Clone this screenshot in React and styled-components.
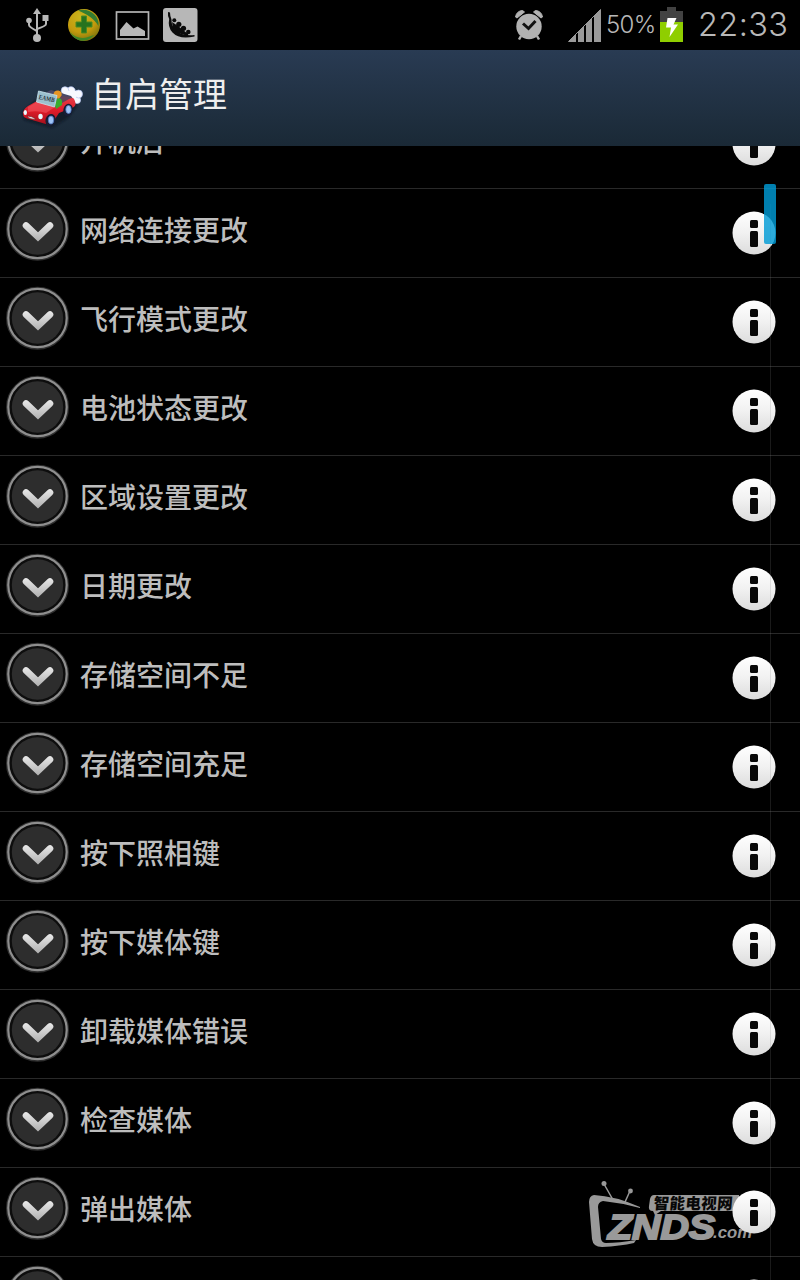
import React from 'react';
import styled, { createGlobalStyle } from 'styled-components';

const Global = createGlobalStyle`
  * { box-sizing: border-box; }
  body { margin: 0; background: #000; }
`;

const Screen = styled.div`
  width: 800px;
  height: 1280px;
  display: flex;
  flex-direction: column;
  overflow: hidden;
  background: #000;
  font-family: "Noto Sans CJK SC", sans-serif;
`;

const StatusBar = styled.div`
  height: 50px;
  flex: none;
  display: flex;
  justify-content: space-between;
  color: #b8b8b8;
  svg { display: block; flex: none; }
`;

const StatusGroup = styled.div`
  display: flex;
  align-items: flex-start;
`;

const StatusText = styled.span`
  width: ${(p) => p.$width}px;
  margin-left: ${(p) => p.$left}px;
  margin-right: ${(p) => p.$right || 0}px;
  font: ${(p) => p.$weight || 300} ${(p) => p.$size}px/50px Inter, sans-serif;
  letter-spacing: ${(p) => p.$spacing || 0}px;
  white-space: nowrap;
`;

const Header = styled.header`
  height: 96px;
  flex: none;
  display: flex;
  padding-left: 20px;
  background: linear-gradient(#293b53, #1a2936);
  position: relative;
  z-index: 2;
`;

const Title = styled.h1`
  margin: 0 0 0 6px;
  font-size: 34px;
  line-height: 86px;
  font-weight: 400;
  color: #eee;
`;

const List = styled.main`
  flex: 1;
  min-height: 0;
  overflow: hidden;
  position: relative;
`;

const Rows = styled.div`
  margin-top: -46px;
`;

const Row = styled.div`
  height: 89px;
  display: flex;
  align-items: flex-start;
  padding: 7px 24px 0 4px;
  border-bottom: 1px solid #292929;
`;

const Label = styled.span`
  flex: 1;
  margin-left: 9px;
  font-size: 28px;
  line-height: 66px;
  font-weight: 500;
  color: #bdbdbd;
`;

const ExpandIcon = styled.svg`
  width: 67px;
  height: 67px;
  flex: none;
`;

const InfoIcon = styled.svg`
  width: 44px;
  height: 44px;
  margin-top: 15px;
  position: relative;
  z-index: 1;
`;

const Track = styled.div`
  position: absolute;
  z-index: 2;
  left: 770px;
  top: 58px;
  bottom: 0;
  width: 1px;
  background: rgba(130, 130, 130, 0.2);
`;

const Thumb = styled.div`
  position: absolute;
  z-index: 3;
  left: 764px;
  top: 38px;
  width: 12px;
  height: 60px;
  border-radius: 2px;
  background: rgba(0, 155, 214, 0.82);
`;

const Watermark = styled.svg`
  position: absolute;
  left: 580px;
  top: 1030px;
`;

const labels = [
  '开机后', '网络连接更改', '飞行模式更改', '电池状态更改', '区域设置更改',
  '日期更改', '存储空间不足', '存储空间充足', '按下照相键', '按下媒体键',
  '卸载媒体错误', '检查媒体', '弹出媒体', '',
];

function Usb() {
  return (
    <svg width="60" height="50" fill="none" stroke="#b8b8b8" strokeWidth="2">
      <path d="M37 13v23M29 20v5q0 2 8 6M46 18v6q0 2-9 5" />
      <path d="M37 8l4 6h-8z" fill="#b8b8b8" stroke="none" />
      <circle cx="29" cy="20.5" r="2.8" fill="#b8b8b8" stroke="none" />
      <path d="M42.5 15h6v6h-6z" fill="#b8b8b8" stroke="none" />
      <circle cx="37" cy="38" r="4" fill="#b8b8b8" stroke="none" />
    </svg>
  );
}

function Shield() {
  return (
    <svg width="50" height="50" viewBox="60 0 50 50">
      <defs>
        <radialGradient id="gold" cx=".4" cy=".25" r=".8">
          <stop offset="0" stopColor="#c9b51d" />
          <stop offset=".6" stopColor="#c39a0d" />
          <stop offset="1" stopColor="#77710d" />
        </radialGradient>
      </defs>
      <circle cx="84" cy="25" r="16" fill="url(#gold)" />
      <path d="M78 10.500C88 7 100 15 98.500 26C94 18 86 14 78 10.500Z" fill="#347d32" />
      <path d="M70 32c5 6 12 7 18 5l6-2c-5 7-18 9-24-3z" fill="#3e8628" />
      <path d="M81.500 16h5v6H92v5h-5.500v6h-5v-6H76v-5h5.500z" fill="#27731e" stroke="#4e8b20" strokeWidth="1" strokeLinejoin="round" />
    </svg>
  );
}

function Picture() {
  return (
    <svg width="50" height="50" viewBox="110 0 50 50">
      <rect x="116.500" y="12" width="32" height="27" fill="none" stroke="#b4b4b4" strokeWidth="1.700" />
      <path d="M120 36v-6l6.500-8 7 6.500 4-2 7.500 4.500v5z" fill="#b8b8b8" />
    </svg>
  );
}

function PeaPod() {
  return (
    <svg width="42" height="50" viewBox="160 0 42 50">
      <rect x="163" y="8" width="34.500" height="34" rx="3" fill="#b7b7b7" />
      <path d="M168 12l2 .5q0 3.500 1.500 7Q171 27 178 32q6 4 16.500 3v1.500q-15 3.500-22-4-5-5.500-3.300-13.500-1.700-3-1.200-7z" fill="#0b0b0b" />
      <g fill="#0b0b0b">
        <circle cx="174.300" cy="20.300" r="2" />
        <circle cx="178.800" cy="24.300" r="2.600" />
        <circle cx="183.500" cy="28.300" r="2.600" />
        <circle cx="188.300" cy="32" r="2.300" />
        <path d="M172 22l6 4 5 4 5 4v2l-10-3-5-5z" />
      </g>
    </svg>
  );
}

function Alarm() {
  return (
    <svg width="54" height="50" viewBox="510 0 54 50">
      <circle cx="529" cy="26.500" r="12.700" fill="#b2b2b2" />
      <path d="M515.500 17q1-6 7-6.500l2 1.500-7.500 6zM542.500 17q-1-6-7-6.500l-2 1.500 7.500 6z" fill="#b2b2b2" stroke="#b2b2b2" strokeLinejoin="round" />
      <path d="M521 36l-2 3.500M537 36l2 3.500" stroke="#b2b2b2" strokeWidth="2.500" />
      <path d="M523 23.500l5.500 5 7-7.500" fill="none" stroke="#111" strokeWidth="3" />
    </svg>
  );
}

function Signal() {
  return (
    <svg width="38" height="50" viewBox="564 0 38 50" fill="#9a9a9a">
      <path d="M568 42l8-8v8zM578 32l6-6v16h-6zM586 24l6-6v24h-6zM594 16l7-7v33h-7z" />
      <path d="M568.500 41.500L600.500 9.500" stroke="#9a9a9a" strokeWidth="1" />
    </svg>
  );
}

function Battery() {
  return (
    <svg width="26" height="50" viewBox="659 0 26 50">
      <path d="M667 7h9v4h7v11h-23V11h7z" fill="#424242" />
      <path d="M660 22h23v20h-23z" fill="#8fce00" />
      <path d="M667.500 18h9l-3 6.500h4.500l-8.500 12.500 1.500-9.500h-5z" fill="#fff" />
    </svg>
  );
}

function Car() {
  return (
    <svg width="65" height="96" viewBox="20 50 65 96">
      <defs>
        <linearGradient id="paint" x1="0" y1="0" x2="0" y2="1">
          <stop offset="0" stopColor="#e63a45" />
          <stop offset=".5" stopColor="#dc1c2a" />
          <stop offset="1" stopColor="#a8101c" />
        </linearGradient>
        <filter id="soft" x="-20%" y="-30%" width="140%" height="160%"><feGaussianBlur stdDeviation="1.200" /></filter>
      </defs>
      <path d="M22 112l14-12 38-2 3 8-9 12-16 10-28-8z" fill="#0c1520" opacity=".7" filter="url(#soft)" />
      <g fill="#f7f9ff" stroke="#b5c4f0" strokeWidth=".7">
        <circle cx="77" cy="100" r="3.600" /><circle cx="78.500" cy="94" r="4" />
        <circle cx="71" cy="91" r="4.300" /><circle cx="65" cy="90.500" r="3.800" />
      </g>
      <path d="M63 91h13v8H64z" fill="#f7f9ff" />
      <path d="M47 92l4-2 20 6 3 4-14 8-12-2z" fill="#494968" />
      <path d="M60 96l11 1-9 7-3-3z" fill="#624459" />
      <path d="M23 114q0-5 5-8l9-5 18 6 14-8q4-2 5 0 3 5 0 8l-15 6-6 9q-4 3-9 1.500l-17-5q-4-1-4-4.500z" fill="url(#paint)" />
      <path d="M28 107l9-5 18 5-9 6q-8-3-18-1z" fill="#f1505a" opacity=".65" />
      <path d="M53.500 95q0-5 5-4.500 4 1 3 5l-3 4z" fill="#e79525" />
      <path d="M55 105l2-6q4-2 5 2l0 4-6 4z" fill="#38ad2c" />
      <path d="M38.500 91L57 95.500 54.500 107 36.500 102z" fill="#9bc0ce" stroke="#c8e3ed" strokeWidth=".8" />
      <text x="38.500" y="99" transform="rotate(12 38.5 99)" fontFamily="Liberation Serif, serif" fontWeight="700" fontSize="6.500" textLength="16" lengthAdjust="spacingAndGlyphs" fill="#28303c">EAMB</text>
      <g fill="#171d35"><ellipse cx="50.500" cy="120" rx="5" ry="6.300" transform="rotate(15 50 120)" /><ellipse cx="68" cy="110" rx="4.600" ry="6.300" transform="rotate(15 68 110)" /></g>
      <g fill="#9fc4f6" stroke="#527bc4" strokeWidth=".8"><ellipse cx="51" cy="120" rx="2.700" ry="4" /><ellipse cx="68.500" cy="109.500" rx="2.700" ry="4" /></g>
      <g fill="#e8fbff"><ellipse cx="25.300" cy="112.500" rx="1.700" ry="2.500" /><ellipse cx="40.500" cy="116.500" rx="2.200" ry="2.800" /></g>
      <path d="M27 116q5 0 9 3-6 1-9-3z" fill="#e8e8e8" stroke="#73101a" strokeWidth=".6" />
    </svg>
  );
}

function Expand() {
  return (
    <ExpandIcon viewBox="0 0 67 67">
      <circle cx="33.500" cy="33.200" r="29.500" fill="none" stroke="#aaa" strokeWidth="4" opacity=".28" />
      <circle cx="33.500" cy="33" r="29.200" fill="#0d0d0d" stroke="#8e8e8e" strokeWidth="2.200" />
      <circle cx="33.500" cy="33" r="25.700" fill="#2d2d2d" />
      <path d="M22 29.500L34 41 46 29.500" fill="none" stroke="url(#silver)" strokeWidth="6.600" strokeLinecap="round" />
    </ExpandIcon>
  );
}

function Info() {
  return (
    <InfoIcon viewBox="0 0 44 44">
      <circle cx="22" cy="22" r="21.500" fill="url(#pearl)" />
      <rect x="18" y="9" width="8" height="8" rx="1.500" fill="#080808" />
      <rect x="18" y="20" width="8" height="16" rx="1.500" fill="#080808" />
    </InfoIcon>
  );
}

function Brand() {
  return (
    <Watermark width="180" height="75" viewBox="580 1176 180 75">
      <g fill="#999">
        <circle cx="604" cy="1183.500" r="2.500" /><circle cx="630.500" cy="1191" r="2.400" />
        <path d="M604 1184l8.500 15M630 1191l-5 11" stroke="#999" strokeWidth="1.500" />
        <path d="M640 1207Q615 1196 594 1195Q589 1196 589 1202L592 1239Q593 1247 602 1247Q620 1246 634 1243L636 1240Q619 1243 606 1243Q602 1243 601 1239L598 1207Q598 1202 603 1201Q622 1203 640 1208Z" />
        <path d="M654 1195h85v16h-78l-6 4-2-4q-5 0-4-5l1-7q1-4 4-4z" />
        <text x="608" y="1238.500" textLength="107" lengthAdjust="spacingAndGlyphs" fontFamily="Liberation Sans, sans-serif" fontWeight="700" fontStyle="italic" fontSize="34.500" stroke="#999" strokeWidth="2">ZNDS</text>
        <text x="713" y="1238" textLength="39" lengthAdjust="spacingAndGlyphs" fontFamily="Liberation Sans, sans-serif" fontWeight="700" fontStyle="italic" fontSize="17">.com</text>
      </g>
      <text x="654" y="1209" transform="skewX(-5) translate(105 0)" textLength="79" fontFamily="Noto Sans CJK SC, sans-serif" fontWeight="900" fontSize="15.500" fill="#080808">智能电视网</text>
    </Watermark>
  );
}

function Gradients() {
  return (
    <svg width="0" height="0" style={{ display: 'block' }}>
      <defs>
        <linearGradient id="silver" gradientUnits="userSpaceOnUse" x1="0" y1="27" x2="0" y2="45">
          <stop stopColor="#e6e6e6" /><stop offset="1" stopColor="#b0b0b0" />
        </linearGradient>
        <linearGradient id="pearl" x1="0" y1="0" x2="0" y2="1">
          <stop stopColor="#fff" /><stop offset=".5" stopColor="#f1f1f1" /><stop offset="1" stopColor="#dcdcdc" />
        </linearGradient>
      </defs>
    </svg>
  );
}

export default function App() {
  return (
    <Screen>
      <Global />
      <Gradients />
      <StatusBar>
        <StatusGroup><Usb /><Shield /><Picture /><PeaPod /></StatusGroup>
        <StatusGroup>
          <Alarm /><Signal />
          <StatusText $size={24} $width={48} $left={4} $right={5} $spacing={-0.7}>50%</StatusText>
          <Battery />
          <StatusText $size={32.5} $width={90} $left={13} $right={12} $spacing={0.4}>22:33</StatusText>
        </StatusGroup>
      </StatusBar>
      <Header><Car /><Title>自启管理</Title></Header>
      <List>
        <Brand />
        <Rows>
          {labels.map((label, i) => (
            <Row key={i}><Expand /><Label>{label}</Label><Info /></Row>
          ))}
        </Rows>
        <Track />
        <Thumb />
      </List>
    </Screen>
  );
}
